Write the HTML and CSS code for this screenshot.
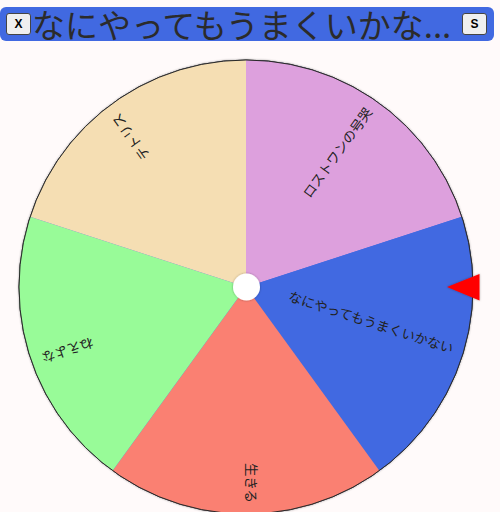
FILE: index.html
```html
<!DOCTYPE html>
<html lang="ja">
<head>
<meta charset="utf-8">
<title>Wheel</title>
<link rel="stylesheet" href="styles.css">
</head>
<body>
<div class="header">
  <button class="btn btn-x">X</button>
  <div class="title">なにやってもうまくいかな...</div>
  <button class="btn btn-s">S</button>
</div>
<svg class="wheel" width="500" height="471" viewBox="0 41 500 471" xmlns="http://www.w3.org/2000/svg">
  <defs>
    <filter id="sh" x="-10%" y="-10%" width="120%" height="120%">
      <feDropShadow dx="0" dy="0" stdDeviation="1.2" flood-color="#000" flood-opacity="0.35"/>
    </filter>
  </defs>
  <g class="rim" filter="url(#sh)">
    <circle cx="246" cy="287" r="227" fill="#4169E1" stroke="#333" stroke-width="1"/>
  </g>
  <path d="M246,287 L246,60 A227,227 0 0,1 461.89,216.85 Z" fill="#DDA0DD"/>
  <path d="M246,287 L461.89,216.85 A227,227 0 0,1 379.43,470.65 Z" fill="#4169E1"/>
  <path d="M246,287 L379.43,470.65 A227,227 0 0,1 112.57,470.65 Z" fill="#FA8072"/>
  <path d="M246,287 L112.57,470.65 A227,227 0 0,1 30.11,216.85 Z" fill="#98FB98"/>
  <path d="M246,287 L30.11,216.85 A227,227 0 0,1 246,60 Z" fill="#F5DEB3"/>
  <circle cx="246" cy="287" r="227" fill="none" stroke="#2a2a2a" stroke-width="1"/>
  <g class="labels">
    <text x="462" y="287" transform="rotate(-54 246 287)">ロストワンの号哭</text>
    <text x="462" y="287" transform="rotate(18 246 287)">なにやってもうまくいかない</text>
    <text x="462" y="287" transform="rotate(90 246 287)">生きる</text>
    <text x="462" y="287" transform="rotate(162 246 287)">ねえよな</text>
    <text x="462" y="287" transform="rotate(234 246 287)">テトリス</text>
  </g>
  <circle cx="246.5" cy="287" r="13.5" fill="#fff" filter="url(#sh)"/>
  <polygon points="447,287 479.5,274 479.5,300.5" fill="#FF0000" filter="url(#sh)"/>
</svg>
</body>
</html>
```
FILE: styles.css
```css
html, body {
  margin: 0;
  padding: 0;
  background: #FFFAFA;
}
body {
  width: 500px;
  height: 512px;
  overflow: hidden;
  font-family: "Noto Sans CJK JP", "Noto Sans", sans-serif;
}
.header {
  margin-top: 7px;
  width: 494px;
  height: 34px;
  background: #4169E1;
  border-radius: 6px;
  display: flex;
  align-items: center;
}
.btn {
  width: 25px;
  height: 22px;
  padding: 0;
  margin: 0;
  background: #efefef;
  border: 1px solid #444;
  border-radius: 3px;
  font-family: "Liberation Sans", Arial, sans-serif;
  font-weight: bold;
  font-size: 12px;
  color: #000;
  box-sizing: border-box;
}
.btn-x {
  margin-left: 6px;
}
.btn-s {
  margin-left: auto;
  margin-right: 7px;
}
.title {
  margin-left: 1px;
  font-size: 33px;
  line-height: 34px;
  color: #2b2b2b;
  white-space: nowrap;
}
.wheel {
  display: block;
}
.labels text {
  font-family: "Noto Sans CJK JP", sans-serif;
  font-size: 13.4px;
  fill: #222;
  text-anchor: end;
}
```
